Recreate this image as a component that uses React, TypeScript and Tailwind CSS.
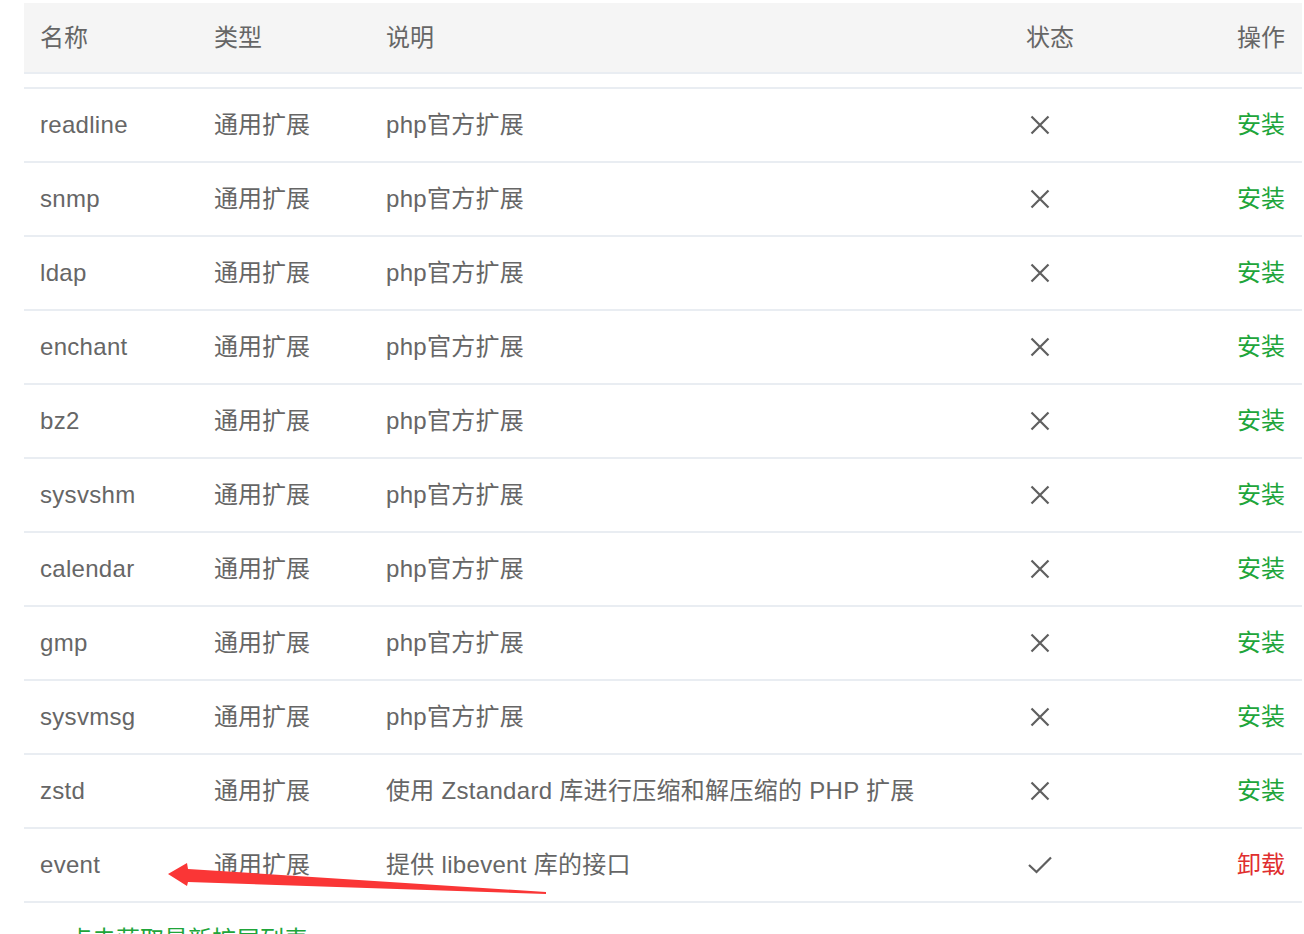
import React from 'react';

type Ext = {
  name: string;
  type: string;
  desc: string;
  installed: boolean;
};

const extensions: Ext[] = [
  { name: 'readline', type: '通用扩展', desc: 'php官方扩展', installed: false },
  { name: 'snmp', type: '通用扩展', desc: 'php官方扩展', installed: false },
  { name: 'ldap', type: '通用扩展', desc: 'php官方扩展', installed: false },
  { name: 'enchant', type: '通用扩展', desc: 'php官方扩展', installed: false },
  { name: 'bz2', type: '通用扩展', desc: 'php官方扩展', installed: false },
  { name: 'sysvshm', type: '通用扩展', desc: 'php官方扩展', installed: false },
  { name: 'calendar', type: '通用扩展', desc: 'php官方扩展', installed: false },
  { name: 'gmp', type: '通用扩展', desc: 'php官方扩展', installed: false },
  { name: 'sysvmsg', type: '通用扩展', desc: 'php官方扩展', installed: false },
  { name: 'zstd', type: '通用扩展', desc: '使用 Zstandard 库进行压缩和解压缩的 PHP 扩展', installed: false },
  { name: 'event', type: '通用扩展', desc: '提供 libevent 库的接口', installed: true },
];

const cols = 'grid grid-cols-[174px_172px_640px_1fr_140px] items-center';

function CrossIcon() {
  return (
    <svg width="24" height="24" viewBox="0 0 24 24" fill="none" stroke="#5f5f5f" strokeWidth="2.2">
      <path d="M3.5 3.5 L20.5 20.5 M20.5 3.5 L3.5 20.5" />
    </svg>
  );
}

function CheckIcon() {
  return (
    <svg width="24" height="24" viewBox="0 0 24 24" fill="none" stroke="#5f5f5f" strokeWidth="2.2">
      <path d="M1 12 L8.5 19 L23 4.5" />
    </svg>
  );
}

export default function App() {
  return (
    <div
      className="relative w-[1304px] h-[934px] overflow-hidden bg-white pt-[3px] pl-[24px] pr-[2px] text-[#666] text-[24px]"
      style={{ fontFamily: '"Liberation Sans", "Noto Sans CJK SC", sans-serif' }}
    >
      {/* 表头 */}
      <div className={`${cols} h-[71px] bg-[#f5f5f5] border-b-2 border-[#e9edf2]`}>
        <div className="pl-4">名称</div>
        <div className="pl-4">类型</div>
        <div className="pl-4">说明</div>
        <div className="pl-4">状态</div>
        <div className="pr-[17px] text-right">操作</div>
      </div>

      {/* 列表 */}
      <div className="mt-[13px] border-t-2 border-[#e9edf2]">
        {extensions.map((ext) => (
          <div key={ext.name} className={`${cols} h-[74px] border-b-2 border-[#e9edf2]`}>
            <div className="pl-4 tracking-[0.3px]">{ext.name}</div>
            <div className="pl-4">{ext.type}</div>
            <div className="pl-4 whitespace-nowrap tracking-[0.3px]">{ext.desc}</div>
            <div className="pl-[18px] flex items-center">
              {ext.installed ? <CheckIcon /> : <CrossIcon />}
            </div>
            <div className="pr-[17px] text-right">
              {ext.installed ? (
                <span className="text-[#e02f2f]">卸载</span>
              ) : (
                <span className="text-[#20a53a]">安装</span>
              )}
            </div>
          </div>
        ))}
      </div>

      <div className="mt-[19px] pl-[44px] text-[#20a53a] whitespace-nowrap">点击获取最新扩展列表</div>

      {/* 红色箭头标注 */}
      <svg className="absolute left-0 top-0 pointer-events-none" width="1304" height="934">
        <polygon
          points="168,874 187,863 188,869 546,892 546,894 188,882 187,886"
          fill="#fa3636"
        />
      </svg>
    </div>
  );
}
